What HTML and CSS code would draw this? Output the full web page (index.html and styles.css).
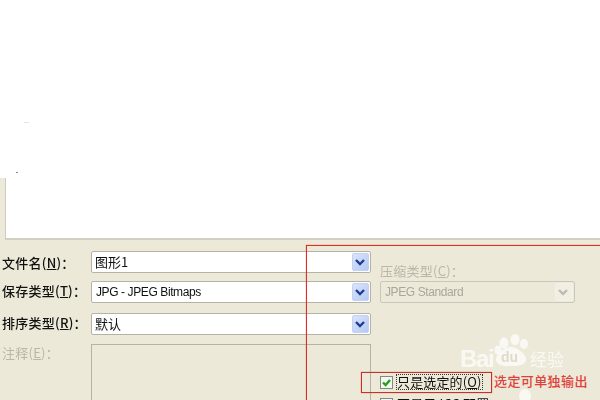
FILE: index.html
```html
<!DOCTYPE html>
<html lang="zh">
<head>
<meta charset="utf-8">
<title>导出</title>
<link rel="stylesheet" href="styles.css">
</head>
<body>
<div class="dialog">
  <div class="preview"></div>
  <div class="form">
    <div class="left">
      <div class="row row-1"><span class="label">文件名(<u>N</u>)：</span>
        <div class="combo"><span class="value">图形1</span><span class="btn"><svg viewBox="0 0 16 18" width="16" height="18"><path d="M4 7l4 4 4-4" fill="none" stroke="#1c3f94" stroke-width="2.4"/></svg></span></div></div>
      <div class="row row-2"><span class="label">保存类型(<u>T</u>)：</span>
        <div class="combo"><span class="value latin">JPG - JPEG Bitmaps</span><span class="btn"><svg viewBox="0 0 16 18" width="16" height="18"><path d="M4 7l4 4 4-4" fill="none" stroke="#1c3f94" stroke-width="2.4"/></svg></span></div></div>
      <div class="row row-3"><span class="label">排序类型(<u>R</u>)：</span>
        <div class="combo"><span class="value">默认</span><span class="btn"><svg viewBox="0 0 16 18" width="16" height="18"><path d="M4 7l4 4 4-4" fill="none" stroke="#1c3f94" stroke-width="2.4"/></svg></span></div></div>
      <div class="row row-4"><span class="label muted">注释(<u>E</u>)：</span>
        <div class="notes"></div></div>
    </div>
    <div class="right">
      <div class="label muted comp">压缩类型(<u>C</u>)：</div>
      <div class="combo disabled"><span class="value latin">JPEG Standard</span><span class="btn"><svg viewBox="0 0 16 18" width="16" height="18"><path d="M4 7l4 4 4-4" fill="none" stroke="#bdbcb2" stroke-width="2.4"/></svg></span></div>
      <div class="check first"><span class="box"><svg viewBox="0 0 11 11" width="11" height="11"><path d="M2 5.5l2.6 2.6L9 3" fill="none" stroke="#21a121" stroke-width="2.4"/></svg></span><span class="check-text focus">只是选定的(<u>O</u>)</span></div>
      <div class="check"><span class="box"></span><span class="check-text">不显示 ICC 配置</span></div>
    </div>
  </div>
  <div class="strip"></div>
  <div class="speck speck-a"></div>
  <div class="speck speck-b"></div>
  <div class="mark">
    <span class="mark-bai">Bai</span>
    <svg class="paw" viewBox="0 0 36 36" width="36" height="36">
      <ellipse cx="11" cy="9" rx="4.5" ry="5.5" fill="#fff"/>
      <ellipse cx="22" cy="5.5" rx="4.5" ry="5.5" fill="#fff"/>
      <ellipse cx="31" cy="10" rx="4" ry="5" fill="#fff"/>
      <ellipse cx="5" cy="16" rx="3.5" ry="4.5" fill="#fff"/>
      <path d="M18 13c6 0 15 7 15 12 0 6-6 7-15 7S3 31 3 25c0-5 9-12 15-12z" fill="#fff"/>
    </svg>
    <span class="mark-du">du</span>
    <span class="mark-cn">经验</span>
  </div>
  <svg class="paw-low" viewBox="0 0 36 36" width="36" height="36">
    <ellipse cx="18" cy="7" rx="6" ry="7" fill="#fff"/>
  </svg>
  <div class="red-big"></div>
  <div class="red-small"></div>
  <div class="red-note">选定可单独输出</div>
</div>
</body>
</html>
```
FILE: styles.css
```css
* { box-sizing: border-box; }
html, body { margin: 0; padding: 0; }
body { width: 600px; height: 400px; overflow: hidden; background: #ece9d8; }
.dialog {
  position: relative;
  width: 600px;
  height: 400px;
  overflow: hidden;
  background: #ece9d8;
  color: #111;
  font: 13px/22px "Noto Sans CJK SC", "Liberation Sans", sans-serif;
}
.preview {
  height: 240px;
  margin-left: 5px;
  background: #fff;
  border-left: 1px solid #cfccbf;
  border-bottom: 2px solid #d3d0c3;
}
.form { display: flex; padding-top: 11px; filter: blur(0.3px); }
.left { width: 371px; flex: none; }
.right { width: 195px; margin-left: 9px; padding-top: 11px; flex: none; }
.row { display: flex; height: 22px; }
.row-2 { margin-top: 8px; }
.row-3 { margin-top: 10px; }
.row-4 { margin-top: 9px; height: 70px; }
.label { width: 91px; flex: none; padding-left: 2px; white-space: nowrap; font-size: 13px; font-weight: 500; letter-spacing: 0.25px; }
.row-1 .label { line-height: 24px; }
.row-2 .label { line-height: 20px; }
.row-3 .label { line-height: 20px; }
.row-4 .label { line-height: 18px; font-weight: 400; }
.muted { color: #b9b7a9; }
.combo {
  display: flex;
  justify-content: space-between;
  align-items: center;
  width: 280px;
  height: 22px;
  padding: 0 1px 0 3px;
  background: #fff;
  border: 1px solid #b5b3a8;
  border-radius: 2px;
}
.notes { width: 280px; height: 70px; border: 1px solid #b5b3a8; }
.value { font-size: 13px; line-height: 20px; }
.latin { font-family: "Liberation Sans", sans-serif; font-size: 12px; padding-left: 1px; letter-spacing: -0.4px; }
.btn {
  width: 17px;
  height: 18px;
  flex: none;
  background: linear-gradient(135deg, #dbe5fb, #b4c8f2);
  border: 1px solid #c3d2f2;
  border-radius: 2px;
}
.btn svg { display: block; margin: -1px 0 0 -1px; }
.comp { width: auto; padding: 0; height: 19px; line-height: 18px; font-weight: 400; }
.disabled { width: 195px; background: #ece9d8; border-color: #c9c7ba; color: #a9a79a; }
.disabled .btn { background: #f1efe4; border-color: #f3f1e8; width: 18px; }
.check { display: flex; align-items: center; height: 14px; gap: 4px; }
.first { margin-top: 72px; margin-bottom: 8px; }
.box {
  display: block;
  width: 13px;
  height: 13px;
  flex: none;
  background: #f6f5ee;
  border: 1px solid #7f8a84;
}
.box svg { display: block; }
.check-text { font-size: 13px; line-height: 14px; white-space: nowrap; letter-spacing: 0.15px; }
.focus { outline: 1px dotted #333; }
.strip { position: absolute; left: 0; top: 0; width: 6px; height: 178px; background: #fff; }
.speck { position: absolute; height: 1px; }
.speck-a { left: 24px; top: 122px; width: 5px; background: #e4e4e4; }
.speck-b { left: 16px; top: 172px; width: 2px; background: #8f8f8f; }
.mark { position: absolute; left: 460px; top: 333px; width: 108px; height: 36px; opacity: 0.72; color: #fff; }
.mark-bai { position: absolute; left: 0; top: 14px; font: 700 24px/24px "Liberation Sans", sans-serif; letter-spacing: -1.4px; }
.mark .paw { position: absolute; left: 33px; top: 1px; }
.mark-du { position: absolute; left: 41px; top: 16px; color: #d9d6c6; font: 700 14px/16px "Liberation Sans", sans-serif; }
.mark-cn { position: absolute; left: 70px; top: 16px; font: 400 17px/20px "Noto Sans CJK SC", sans-serif; }
.paw-low { position: absolute; left: 507px; top: 389px; opacity: 0.7; }
.red-big { position: absolute; left: 306px; top: 245px; width: 310px; height: 170px; border: 1px solid #dc2f2a; box-shadow: 0 0 1px rgba(220, 47, 42, 0.7); }
.red-small { position: absolute; left: 361px; top: 372px; width: 131px; height: 21px; border: 1px solid #c8302c; box-shadow: 0 0 1px rgba(200, 48, 44, 0.7); }
.red-note { position: absolute; left: 494px; top: 371px; color: #e0403a; font-size: 13px; font-weight: 500; line-height: 20px; white-space: nowrap; letter-spacing: 0.4px; }
```
